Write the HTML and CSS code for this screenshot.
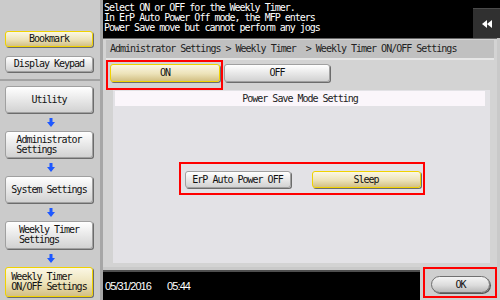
FILE: index.html
```html
<!DOCTYPE html>
<html>
<head>
    <meta charset="utf-8">
    <link rel="stylesheet" href="styles.css">
</head>
<body>
    <div class="screen">
        <div class="sidebar">
            <div class="quick">
                <div class="btn yellow side-btn">Bookmark</div>
                <div class="btn side-btn">Display Keypad</div>
            </div>
            <div class="path">
                <div class="btn path-btn">Utility</div>
                <div class="down"><svg width="8" height="9" viewBox="0 0 8 9"><path d="M2.5 0h3v4h2.5L4 9 0 4h2.5z"/></svg></div>
                <div class="btn path-btn"><span>Administrator<br>Settings</span></div>
                <div class="down"><svg width="8" height="9" viewBox="0 0 8 9"><path d="M2.5 0h3v4h2.5L4 9 0 4h2.5z"/></svg></div>
                <div class="btn path-btn">System Settings</div>
                <div class="down"><svg width="8" height="9" viewBox="0 0 8 9"><path d="M2.5 0h3v4h2.5L4 9 0 4h2.5z"/></svg></div>
                <div class="btn path-btn tall"><span>Weekly Timer<br>Settings</span></div>
                <div class="down"><svg width="8" height="9" viewBox="0 0 8 9"><path d="M2.5 0h3v4h2.5L4 9 0 4h2.5z"/></svg></div>
                <div class="btn yellow path-btn last"><span>Weekly Timer<br>ON/OFF Settings</span></div>
            </div>
        </div>

        <div class="main">
            <div class="header">
                <div class="message">Select ON or OFF for the Weekly Timer.<br>In ErP Auto Power Off mode, the MFP enters<br>Power Save move but cannot perform any jogs</div>
                <div class="back"><svg width="10" height="8" viewBox="0 0 10 8"><path d="M5 0v8L0 4zM10 0v8L5 4z"/></svg></div>
            </div>

            <div class="panel">
                <div class="crumbs">Administrator Settings &gt; Weekly Timer&nbsp; &gt; Weekly Timer ON/OFF Settings</div>
                <div class="toggle-row">
                    <div class="mark toggle-mark"><div class="btn yellow toggle">ON</div></div>
                    <div class="btn toggle off">OFF</div>
                </div>
                <div class="sub">
                    <div class="sub-title">Power Save Mode Setting</div>
                    <div class="mark mode-row">
                        <div class="btn mode erp">ErP Auto Power OFF</div>
                        <div class="btn yellow mode sleep">Sleep</div>
                    </div>
                </div>
            </div>

            <div class="footer">
                <div class="clock"><span>05/31/2016</span><span>05:44</span></div>
                <div class="ok-area">
                    <div class="mark ok-mark"><div class="ok">OK</div></div>
                </div>
            </div>
        </div>
    </div>
</body>
</html>
```

FILE: styles.css
```css
body {
    margin: 0;
    font-family: "DejaVu Sans Mono", "Liberation Mono", monospace;
    font-size: 10px;
    letter-spacing: -1px;
    color: #111;
}
.screen {
    display: flex;
    width: 500px;
    height: 300px;
    overflow: hidden;
}

/* left column */
.sidebar {
    width: 100px;
    border-right: 3px solid #a6a6a6;
    background: #cbcbcb;
    padding-top: 31px;
    display: flex;
    flex-direction: column;
}
.quick {
    display: flex;
    flex-direction: column;
    gap: 9px;
    padding-bottom: 7px;
    border-bottom: 2px solid #a2a2a2;
}
.path {
    display: flex;
    flex-direction: column;
    padding-top: 5px;
}
.btn {
    box-sizing: border-box;
    display: flex;
    align-items: center;
    justify-content: center;
    background: linear-gradient(#ffffff, #e4e4e4 60%, #d2d2d2);
    border: 1px solid #a0a0a0;
    border-radius: 3px;
    box-shadow: 1px 1px 0 #6c6c6c;
    line-height: 10px;
}
.btn span {
    text-align: left;
}
.yellow {
    background: linear-gradient(#fbf7e4, #ece2b8 55%, #d3c084);
    border: 1px solid #f0d200;
}
.side-btn {
    width: 88px;
    height: 16px;
    margin-left: 5px;
}
.path-btn {
    width: 88px;
    height: 27px;
    margin-left: 5px;
}
.path-btn.tall {
    height: 28px;
}
.path-btn.last {
    height: 30px;
}
.down {
    height: 18px;
    display: flex;
    align-items: center;
    justify-content: center;
    padding-left: 1px;
}
.down svg {
    fill: #1e58ff;
}

/* right column */
.main {
    width: 397px;
    display: flex;
    flex-direction: column;
    background: #c9c9c9;
}
.header {
    height: 38px;
    background: #000;
    display: flex;
    align-items: flex-end;
}
.message {
    flex: 1;
    align-self: flex-start;
    color: #fff;
    line-height: 10px;
    padding: 3px 0 0 1px;
}
.back {
    width: 27px;
    height: 30px;
    background: #303030;
    border-top: 1px solid #4a4a4a;
    box-sizing: border-box;
    display: flex;
    align-items: center;
    justify-content: center;
}
.back svg {
    fill: #fff;
}

.panel {
    height: 229px;
    box-sizing: border-box;
    margin-right: 3px;
    padding: 1px 3px 4px;
    background: #d3d3d3;
    border-top: 1px solid #666;
}
.crumbs {
    height: 18px;
    line-height: 18px;
    padding-left: 4px;
    background: #c0c0c0;
    border-bottom: 2px solid #e6e6e6;
    color: #222;
    white-space: nowrap;
}
.mark {
    border: 2px solid #f00;
}
.toggle-row {
    display: flex;
    align-items: flex-start;
    height: 30px;
}
.toggle-mark {
    padding: 2px 1px 6px 2px;
}
.toggle {
    width: 110px;
    height: 18px;
}
.toggle.off {
    width: 106px;
    margin: 4px 0 0 1px;
}
.sub {
    height: 173px;
    margin: 0 4px 0 7px;
    background: #e3e2e6;
    padding-top: 1px;
    box-sizing: border-box;
}
.sub-title {
    height: 15px;
    line-height: 16px;
    margin: 0 5px 0 2px;
    background: #fbf6fb;
    text-align: center;
    color: #222;
}
.mode-row {
    display: flex;
    width: 246px;
    box-sizing: border-box;
    margin: 56px auto 0;
    padding: 7px 2px 5px 4px;
    gap: 21px;
}
.mode {
    height: 17px;
}
.erp {
    width: 106px;
}
.sleep {
    width: 109px;
}

.footer {
    height: 33px;
    display: flex;
}
.clock {
    width: 317px;
    margin-top: 3px;
    background: #000;
    border-top: 2px solid #4e4e4e;
    box-sizing: border-box;
    color: #fff;
    font-family: "Liberation Sans", Arial, sans-serif;
    font-size: 11px;
    letter-spacing: -0.9px;
    display: flex;
    align-items: center;
    gap: 16px;
    padding-left: 2px;
}
.ok-area {
    flex: 1;
    background: #cfcfcf;
    padding: 0 3px 2px;
}
.ok-mark {
    height: 31px;
    box-sizing: border-box;
    padding: 7px 5px 3px 6px;
}
.ok {
    width: 59px;
    height: 17px;
    box-sizing: border-box;
    border: 1px solid #707070;
    border-radius: 9px;
    background: linear-gradient(#f4f4f4, #dcdcdc 55%, #b8b8b8);
    box-shadow: 1px 1px 0 #555;
    display: flex;
    align-items: center;
    justify-content: center;
}
```
